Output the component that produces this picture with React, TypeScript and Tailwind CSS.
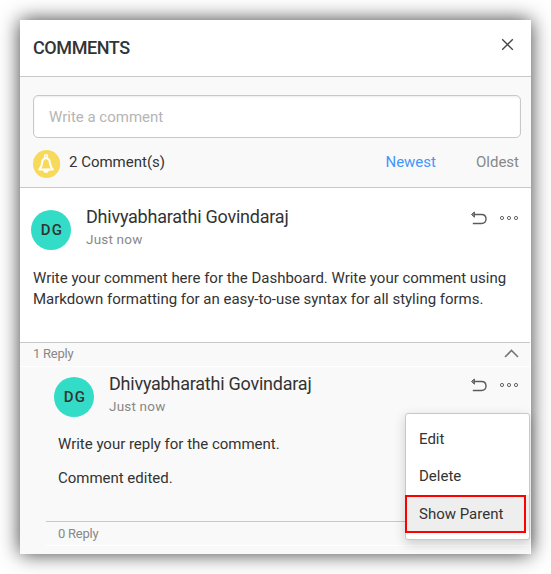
import React from "react";

function ReplyIcon() {
  return (
    <svg className="block" width="18" height="14" viewBox="0 0 18 14" fill="none" stroke="#5c5c5c" strokeWidth="1.4">
      <path d="M2 3.5H11.6C14.4 3.5 16 5.3 16 8S14.4 12.5 11.6 12.5H2.8" />
      <path d="M4.4 1L1.5 3.5L4.4 6.2Z" fill="#8a8a8a" strokeWidth="1" />
    </svg>
  );
}

function MoreIcon() {
  return (
    <svg className="block" width="20" height="6" viewBox="0 0 20 6" fill="none" stroke="#666" strokeWidth="1">
      <circle cx="3" cy="3" r="1.6" />
      <circle cx="10" cy="3" r="1.6" />
      <circle cx="17" cy="3" r="1.6" />
    </svg>
  );
}

function BellBadge() {
  return (
    <svg className="block" width="28" height="28" viewBox="0 0 28 28" fill="none">
      <ellipse cx="13.6" cy="14" rx="13.6" ry="14" fill="#f7da5c" />
      <g stroke="#fff" strokeLinejoin="round">
        <circle cx="13" cy="6.1" r="1.5" strokeWidth="1.4" />
        <path strokeWidth="2" d="M13 8.2C10.4 8.2 9.3 10.2 9.1 12.8C8.9 16 8 17.6 6.2 19.4H19.8C18 17.6 17.1 16 16.9 12.8C16.7 10.2 15.6 8.2 13 8.2Z" />
      </g>
      <path d="M10 20H16C15.6 23.8 10.4 23.8 10 20Z" fill="#fff" />
    </svg>
  );
}

function CommentHead() {
  return (
    <div className="flex">
      <div className="flex h-10 w-10 shrink-0 items-center justify-center rounded-full bg-[#33dcc7] pl-[2px] text-[15px] font-medium tracking-[1.3px] text-[#333]">
        DG
      </div>
      <div className="-mt-[5px] ml-[15px] flex-1">
        <div className="text-[18px] leading-6 tracking-[-0.23px]">Dhivyabharathi Govindaraj</div>
        <div className="text-[13.5px] leading-[21px] tracking-[0.2px] text-[#888]">Just now</div>
      </div>
      <div className="mt-px flex gap-[11px] pr-3">
        <ReplyIcon />
        <div className="pt-1"><MoreIcon /></div>
      </div>
    </div>
  );
}

export default function App() {
  return (
    <div className="h-[574px] w-[551px] overflow-hidden bg-white p-5 font-[Roboto,sans-serif] text-[#333]">
      <div className="relative h-[534px] w-[511px] bg-white shadow-[0_0_19px_rgba(0,0,0,0.76)]">
        <header className="flex h-[57px] items-center justify-between border-b border-[#c8c8c8] pr-[17px] pl-[13px]">
          <h1 className="-mt-[2px] text-[18px] font-medium tracking-[-0.42px]">COMMENTS</h1>
          <svg className="-mt-[7px] block" width="13" height="13" viewBox="0 0 13 13" stroke="#444" strokeWidth="1.3">
            <path d="M1.2 1.2L11.8 11.8M11.8 1.2L1.2 11.8" />
          </svg>
        </header>
        <section className="h-[111px] border-b border-[#c8c8c8] bg-[#f9f9f9] pt-[18px] pr-[10px] pl-[13px]">
          <div className="flex h-[43px] items-center rounded-[5px] border border-[#c8c8c8] bg-white pt-px pl-[15px] text-[15px] text-[#b5b5b5] shadow-[inset_0_1px_2px_rgba(0,0,0,0.08)]">
            Write a comment
          </div>
          <div className="mt-3 flex items-start text-[15px] leading-6">
            <BellBadge />
            <span className="ml-2">2 Comment(s)</span>
            <span className="ml-auto text-[#4595fb]">Newest</span>
            <span className="mr-[2px] ml-10 text-[#888]">Oldest</span>
          </div>
        </section>
        <section className="h-[154px] pt-[22px] pl-[11px]">
          <CommentHead />
          <p className="mt-[18px] ml-[2px] w-[490px] text-[15px] leading-[21px] tracking-[-0.015px]">
            Write your comment here for the Dashboard. Write your comment using
            <br />
            Markdown formatting for an easy-to-use syntax for all styling forms.
          </p>
        </section>
        <section className="mr-px h-[212px] bg-[#f9f9f9]">
          <div className="flex h-[25px] items-center justify-between border-t border-b border-t-[#c8c8c8] border-b-white pr-[11px] pl-[13px] text-[13px] tracking-[-0.25px] text-[#888]">
            <span className="-mt-[2px]">1 Reply</span>
            <svg className="-mt-[2px] block" width="15" height="9" viewBox="0 0 15 9" fill="none" stroke="#777" strokeWidth="1.6">
              <path d="M1 8L7.5 1.5L14 8" />
            </svg>
          </div>
          <div className="-mr-px pt-[10px] pl-[34px]">
            <CommentHead />
          </div>
          <div className="mt-[17px] ml-[38px] text-[15px] leading-[21px] tracking-[-0.015px]">
            <p>Write your reply for the comment.</p>
            <p className="mt-[13px]">Comment edited.</p>
          </div>
          <div className="mt-8 ml-[26px] flex h-[25px] items-center border-t border-b border-t-[#c8c8c8] border-b-white pl-3 text-[13px] tracking-[-0.25px] text-[#888]">
            0 Reply
          </div>
        </section>
        <div className="absolute top-[393px] left-[385px] h-[127px] w-[125px] rounded-[3px] border border-[#c8c8c8] bg-white pt-[6px] text-[15px] shadow-[0_4px_12px_rgba(0,0,0,0.18)]">
          <div className="flex h-[38px] items-center pl-[13px]">Edit</div>
          <div className="flex h-[37px] items-center pl-[13px]">Delete</div>
          <div className="flex h-[36px] items-center bg-[#eee] pt-[2px] pl-[13px]">Show Parent</div>
          <div className="absolute top-[81px] -left-px h-[38px] w-[121px] border-2 border-[#f00]" />
        </div>
      </div>
    </div>
  );
}
